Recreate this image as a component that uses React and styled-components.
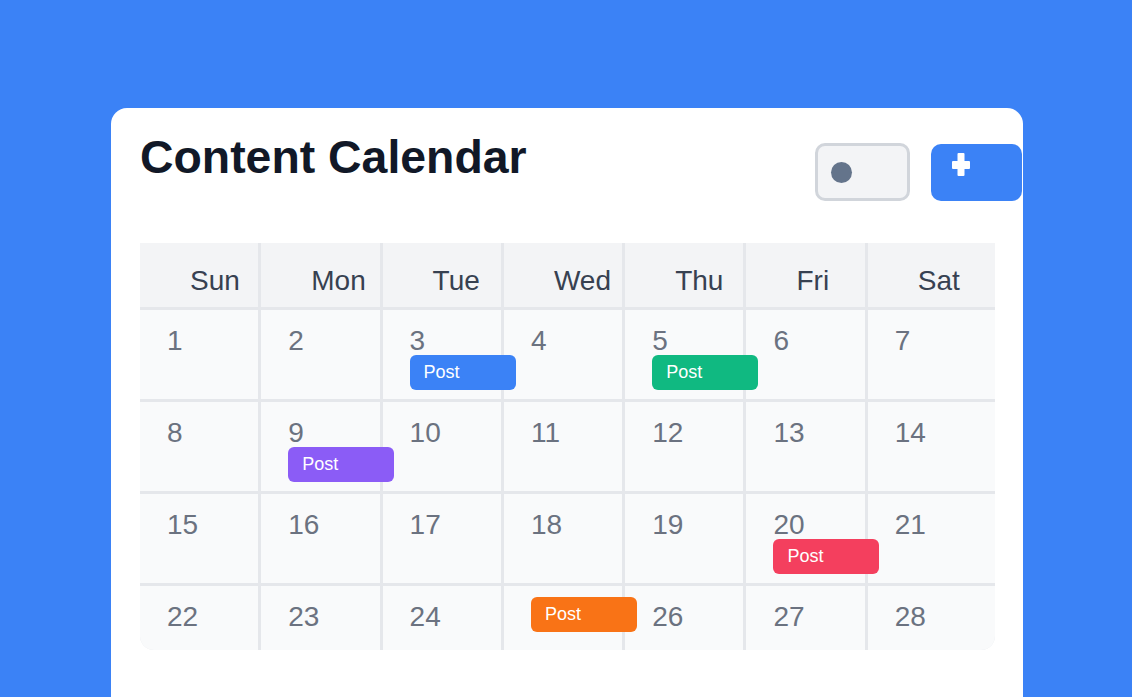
import React from 'react'
import styled, { createGlobalStyle } from 'styled-components'

const GlobalStyle = createGlobalStyle`
  html, body {
    margin: 0;
    padding: 0;
    height: 100%;
    overflow: hidden;
    background: #3b82f6;
    font-family: 'Liberation Sans', Arial, sans-serif;
  }
`

const weekDays = ['Sun', 'Mon', 'Tue', 'Wed', 'Thu', 'Fri', 'Sat']

// posts shown under the day number
const posts = {
  3: '#3b82f6',
  5: '#10b981',
  9: '#8b5cf6',
  20: '#f43f5e',
}

// posts that take the place of the day number
const coverPosts = {
  25: '#f97316',
}

const days = Array.from({ length: 28 }, (_, i) => i + 1)

function PlusIcon() {
  return (
    <svg width="18" height="23" viewBox="0 0 18 23">
      <rect x="5.5" y="0" width="7" height="23" rx="1" fill="#fff" />
      <rect x="0" y="8" width="18" height="8" rx="1" fill="#fff" />
    </svg>
  )
}

function App() {
  return (
    <Page>
      <GlobalStyle />
      <Card>
        <Header>
          <Title>Content Calendar</Title>
          <Actions>
            <Toggle aria-label="toggle view">
              <ToggleDot />
            </Toggle>
            <AddButton aria-label="add post">
              <PlusIcon />
            </AddButton>
          </Actions>
        </Header>
        <Grid>
          {weekDays.map((d) => (
            <DayName key={d}>{d}</DayName>
          ))}
          {days.map((n) => (
            <DayCell key={n}>
              {coverPosts[n] ? (
                <PostChip $color={coverPosts[n]} $cover>Post</PostChip>
              ) : (
                <DayNumber>{n}</DayNumber>
              )}
              {posts[n] && <PostChip $color={posts[n]}>Post</PostChip>}
            </DayCell>
          ))}
        </Grid>
      </Card>
    </Page>
  )
}

const Page = styled.div`
  display: flex;
  justify-content: center;
  padding: 108px 0 0 2px;
`

const Card = styled.div`
  width: 912px;
  box-sizing: border-box;
  background: #ffffff;
  border-radius: 16px;
  padding: 23px 28px 80px 29px;
  overflow: hidden;
`

const Header = styled.div`
  display: flex;
  justify-content: space-between;
  align-items: flex-start;
  height: 70px;
  margin-bottom: 42px;
`

const Title = styled.h1`
  margin: 0;
  font-size: 46.4px;
  line-height: 53px;
  font-weight: 700;
  color: #111827;
`

const Actions = styled.div`
  display: flex;
  align-items: center;
  gap: 21px;
  margin-top: 12px;
  margin-right: -27px;
`

const Toggle = styled.div`
  width: 95px;
  height: 58px;
  box-sizing: border-box;
  border: 3px solid #d1d5db;
  border-radius: 10px;
  background: #f3f4f6;
  display: flex;
  align-items: center;
  padding-left: 13px;
`

const ToggleDot = styled.span`
  width: 21px;
  height: 21px;
  border-radius: 50%;
  background: #64748b;
`

const AddButton = styled.div`
  width: 91px;
  height: 57px;
  box-sizing: border-box;
  border-radius: 10px;
  background: #3b82f6;
  display: flex;
  align-items: flex-start;
  padding: 9px 0 0 21px;
`

const Grid = styled.div`
  display: grid;
  grid-template-columns: repeat(6, 118.3px) minmax(0, 1fr);
  grid-template-rows: 64px repeat(4, 89px);
  gap: 3px;
  background: #e5e7eb;
  height: 407px;
  overflow: hidden;
  border-radius: 0 0 14px 14px;
`

const DayName = styled.div`
  background: #f3f4f6;
  display: flex;
  align-items: center;
  padding: 12px 0 0 50px;
  font-size: 28px;
  color: #374151;
`

const DayCell = styled.div`
  position: relative;
  min-width: 0;
  background: #f9fafb;
  padding: 17px 0 0 27px;
  display: flex;
  flex-direction: column;
  align-items: flex-start;
`

const DayNumber = styled.span`
  font-size: 28px;
  line-height: 28px;
  color: #6b7280;
`

const PostChip = styled.div`
  position: relative;
  z-index: 2;
  margin-top: ${(p) => (p.$cover ? '-6px' : '0')};
  width: 106px;
  height: 35px;
  box-sizing: border-box;
  flex-shrink: 0;
  padding-left: 14px;
  border-radius: 6px;
  background: ${(p) => p.$color};
  color: #ffffff;
  font-size: 18px;
  line-height: 35px;
`

export default App
